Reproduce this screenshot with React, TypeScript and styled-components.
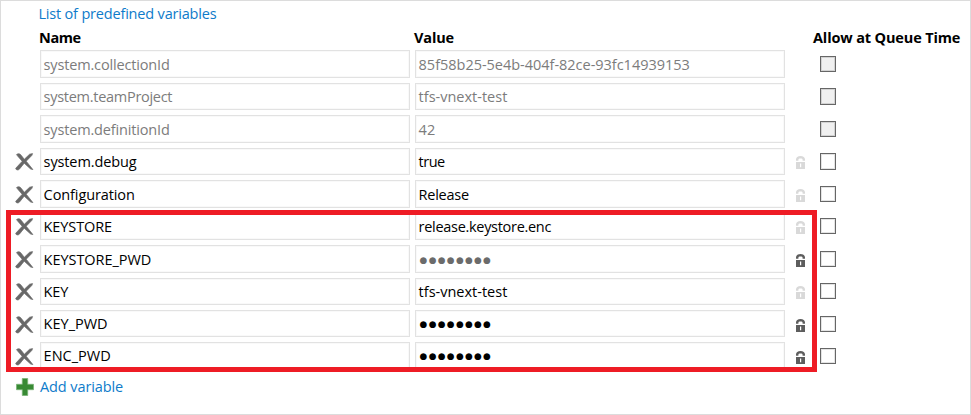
import React from "react";
import styled, { createGlobalStyle } from "styled-components";

const GlobalStyle = createGlobalStyle`
  body { margin: 0; background: #fff; }
  *, *::before, *::after { box-sizing: border-box; }
`;

const Panel = styled.main`
  position: relative;
  width: 971px;
  height: 415px;
  padding: 3px 0 0 14px;
  border: 1px solid #dcdcdc;
  overflow: hidden;
  background: #fff;
  color: #000;
  font: 14.5px/20px "Open Sans", "Noto Sans", sans-serif;
  white-space: nowrap;
`;

const Text = styled.span<{ $track?: number }>`
  letter-spacing: ${(p) => p.$track ?? 0}px;
`;

const Link = styled.a<{ $track?: number }>`
  color: #0e7bca;
  text-decoration: none;
  letter-spacing: ${(p) => p.$track ?? 0}px;
`;

const TopLine = styled.div`
  display: flex;
  height: 20px;
  padding-left: 23.4px;
`;

const columns = "25px 370px 5px 370px 35px 1fr";

const HeaderRow = styled.div`
  display: grid;
  grid-template-columns: 24px 375px 399px 1fr;
  height: 26px;
  padding-top: 4px;
  font-weight: 700;
`;

const Row = styled.div<{ $height: number }>`
  display: grid;
  grid-template-columns: ${columns};
  height: ${(p) => p.$height + 5}px;
  padding-bottom: 5px;
`;

const Field = styled.div<{ $muted?: boolean; $column: number }>`
  grid-column: ${(p) => p.$column};
  display: flex;
  align-items: center;
  padding: 1px 0 0 2.6px;
  border: 1px solid #e2e2e2;
  box-shadow: inset 0 0 0 1px #f9f9f9;
  color: ${(p) => (p.$muted ? "#7c7c7c" : "#000")};
`;

const Dots = styled.span<{ $muted?: boolean }>`
  padding-left: 1px;
  color: ${(p) => (p.$muted ? "#6b6b6b" : "#000")};
  font: 8.8px/20px "DejaVu Sans", sans-serif;
  letter-spacing: 1.4px;
`;

const Cell = styled.div<{ $column: number; $top: number; $left: number }>`
  grid-column: ${(p) => p.$column};
  display: flex;
  align-items: flex-start;
  padding: ${(p) => p.$top}px 0 0 ${(p) => p.$left}px;
  svg { flex: none; }
`;

const Checkbox = styled.span<{ $disabled?: boolean; $tall?: boolean }>`
  width: 16px;
  height: ${(p) => (p.$tall ? 17 : 16)}px;
  border: 1px solid #666;
  box-shadow: inset 0 0 0 1px ${(p) => (p.$disabled ? "#d2d2d2" : "#e4e4e4")};
  background: ${(p) => (p.$disabled ? "#f0f0f0" : "#fff")};
`;

const AddRow = styled.div`
  display: flex;
  height: 24px;
  align-items: center;
  gap: 6px;
  padding: 1px 0 0 1px;
`;

const Highlight = styled.div`
  position: absolute;
  left: 5px;
  top: 209px;
  width: 811px;
  height: 162px;
  border: 5px solid #ee1c25;
`;

const DeleteIcon = () => (
  <svg width="19" height="18" viewBox="0 0 19 18">
    <path d="M1.5 1.6C3 .2 4.8.6 6 2.1L9.3 6.3 14.6 1.2 17.6.6 16.8 2.5 11.2 8.2 17.9 16.6 15.6 16 9.2 10.2 4.6 15.9C3.3 17.6.8 17.2.7 15.3L7.2 8.3 3 3.5Z" fill="#686868" stroke="#6c6c6c" strokeWidth=".7" strokeLinejoin="round" />
  </svg>
);

const LockIcon = ({ active }: { active: boolean }) => (
  <svg width="9" height="13" viewBox="0 0 9 13">
    <g fill={active ? "#5d5d5d" : "#d9d9d9"}>
      <path d="M0 4.8V3.5C0 1.3 1.8 0 4.5 0S9 1.3 9 3.5V4.8H6.6V4C6.6 3 6 2.6 4.5 2.6S2.4 3 2.4 4V4.8Z" />
      <path d="M0 6H9V13H0Z" />
    </g>
    <path d="M4 7.6H5.2V11.3H4Z" fill="#fff" />
  </svg>
);

const PlusIcon = () => (
  <svg width="18" height="18" viewBox="0 0 18 18">
    <path d="M6.3.5H11.7V6.3H17.5V11.7H11.7V17.5H6.3V11.7H.5V6.3H6.3Z" fill="#388a34" stroke="#79b276" strokeWidth=".8" />
  </svg>
);

interface Variable {
  name: string;
  value?: string;
  nameTrack?: number;
  valueTrack?: number;
  height: number;
  system?: boolean;
  secret?: boolean;
  mutedSecret?: boolean;
  tallBox?: boolean;
  iconTop?: number;
}

const variables: Variable[] = [
  { name: "system.collectionId", nameTrack: -0.16, value: "85f58b25-5e4b-404f-82ce-93fc14939153", valueTrack: -0.02, height: 28, system: true },
  { name: "system.teamProject", nameTrack: -0.28, value: "tfs-vnext-test", height: 27, system: true, tallBox: true },
  { name: "system.definitionId", nameTrack: -0.16, value: "42", height: 28, system: true },
  { name: "system.debug", nameTrack: -0.12, value: "true", valueTrack: -0.5, height: 27, tallBox: true },
  { name: "Configuration", nameTrack: -0.1, value: "Release", valueTrack: -0.25, height: 28 },
  { name: "KEYSTORE", nameTrack: -0.1, value: "release.keystore.enc", valueTrack: -0.3, height: 27 },
  { name: "KEYSTORE_PWD", nameTrack: -0.05, height: 28, secret: true, mutedSecret: true },
  { name: "KEY", nameTrack: -0.1, value: "tfs-vnext-test", height: 27 },
  { name: "KEY_PWD", height: 27, secret: true, iconTop: 6 },
  { name: "ENC_PWD", height: 27, secret: true, iconTop: 6 },
];

const VariableRow = ({ item }: { item: Variable }) => {
  const top = item.iconTop ?? (item.height === 28 ? 6 : 5);
  return (
    <Row $height={item.height}>
      {!item.system && (
        <Cell $column={1} $top={top - 0.4} $left={0}><DeleteIcon /></Cell>
      )}
      <Field $column={2} $muted={item.system}>
        <Text $track={item.nameTrack}>{item.name}</Text>
      </Field>
      <Field $column={4} $muted={item.system}>
        {item.secret
          ? <Dots $muted={item.mutedSecret}>●●●●●●●●</Dots>
          : <Text $track={item.valueTrack}>{item.value}</Text>}
      </Field>
      {!item.system && (
        <Cell $column={5} $top={top + 3} $left={11}><LockIcon active={!!item.secret} /></Cell>
      )}
      <Cell $column={6} $top={top} $left={0}>
        <Checkbox $disabled={item.system} $tall={item.tallBox} />
      </Cell>
    </Row>
  );
};

export default function App() {
  return (
    <Panel>
      <GlobalStyle />
      <TopLine><Link href="#" $track={-0.18}>List of predefined variables</Link></TopLine>
      <HeaderRow>
        <span />
        <Text $track={-0.4}>Name</Text>
        <Text $track={-0.15}>Value</Text>
        <Text $track={-0.14}>Allow at Queue Time</Text>
      </HeaderRow>
      {variables.map((item) => <VariableRow key={item.name} item={item} />)}
      <AddRow>
        <PlusIcon />
        <Link href="#" $track={-0.1}>Add variable</Link>
      </AddRow>
      <Highlight />
    </Panel>
  );
}
